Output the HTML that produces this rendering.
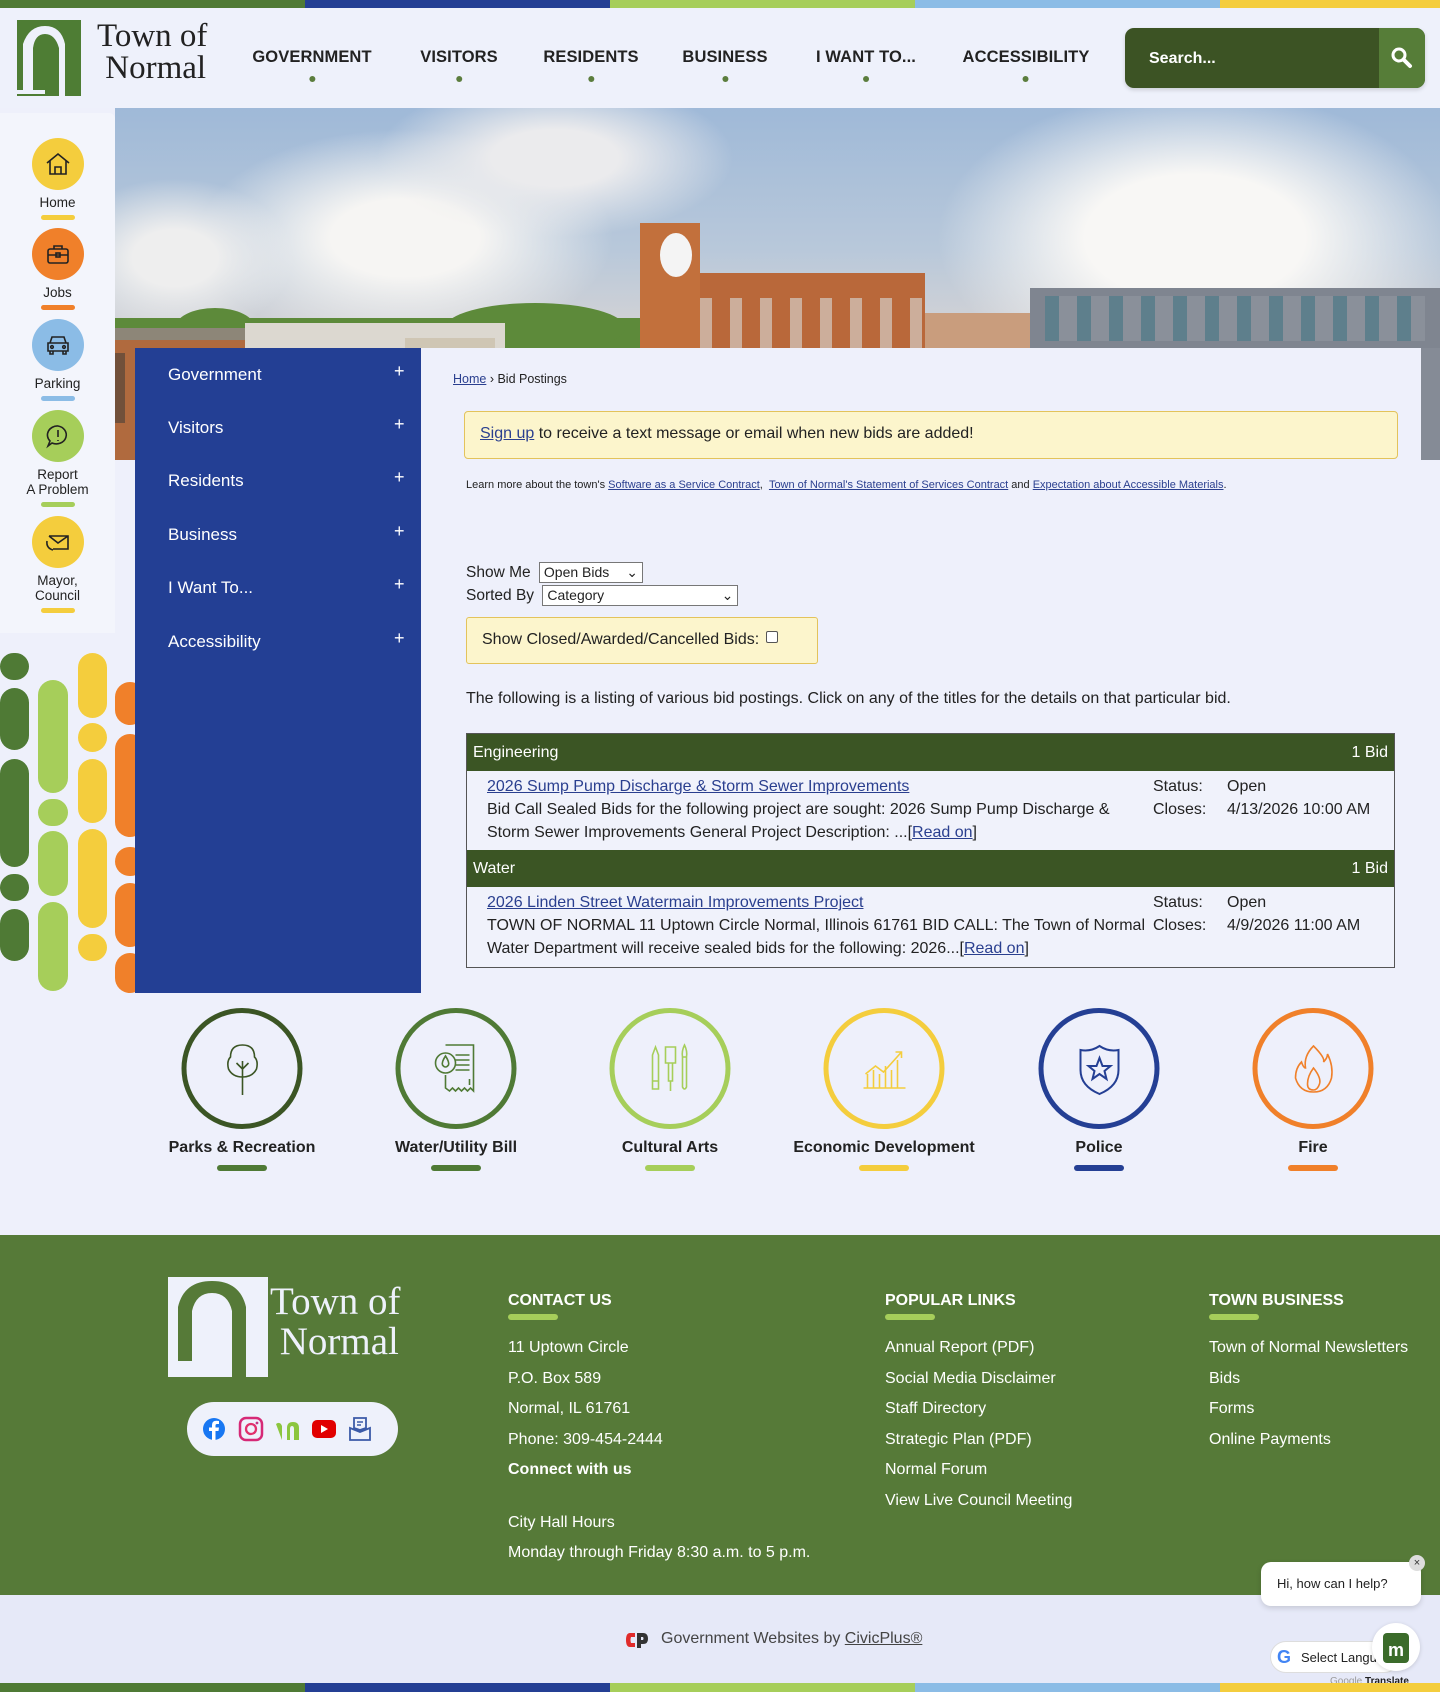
<!DOCTYPE html>
<html><head><meta charset="utf-8">
<style>
*{margin:0;padding:0;box-sizing:border-box}
body{width:1440px;height:1692px;position:relative;overflow:hidden;background:#eef0fb;font-family:"Liberation Sans",sans-serif;color:#222}
.a{position:absolute}
.stripe{height:8px;width:1440px;display:flex}
.stripe div{width:305px}
.stripe div:last-child{width:220px}
a{color:#2a3f8f}
.nav{font-weight:bold;font-size:16.5px;color:#222;top:48px;transform:translateX(-50%);text-align:center;letter-spacing:.1px}
.nav:after{content:"";display:block;width:6px;height:6px;border-radius:50%;background:#5b7d3d;margin:9px auto 0}
.ql{left:0;width:115px;text-align:center;font-size:13.5px;color:#222}
.ql .c{width:52px;height:52px;border-radius:50%;margin:0 auto 5px;display:flex;align-items:center;justify-content:center}
.ql .u{width:34px;height:5px;border-radius:3px;margin:5px auto 0}
.p{position:absolute;border-radius:15px}
.sn{left:168px;color:#fff;font-size:17px}
.pl{left:394px;color:#fff;font-size:18px}
.circ{width:121px;height:121px;border-radius:50%;border:5px solid;display:flex;align-items:center;justify-content:center;top:1008px;transform:translateX(-50%)}
.cl{top:1139px;transform:translateX(-50%);font-size:16px;font-weight:bold;color:#222;white-space:nowrap}
.cu{top:1165px;width:50px;height:6px;border-radius:3px;transform:translateX(-50%)}
.ft{color:#fff;font-size:16px}
.fh{font-weight:bold;font-size:16px;color:#fff;top:1292px}
.fu{top:1314px;width:50px;height:6px;border-radius:3px;background:#a6ce5a}
td{vertical-align:top}
</style></head><body>

<div class="a stripe" style="top:0"><div style="background:#4f7a35"></div><div style="background:#243f94"></div><div style="background:#a6ce5a"></div><div style="background:#8bbce6"></div><div style="background:#f4cd3d"></div></div>

<!-- header -->
<div class="a" style="top:8px;left:0;width:1440px;height:100px;background:#eef1fb"></div>
<svg class="a" style="left:15px;top:18px" width="80" height="80" viewBox="0 0 80 80">
<rect x="0" y="0" width="80" height="80" fill="#eef1fb"/>
<rect x="2" y="2" width="64" height="76" fill="#4e7d34"/>
<path d="M8 72 V26 Q14 8 30 8 Q46 8 50 26 V78 H44 V30 Q40 16 30 16 Q20 16 18 30 V72Z" fill="#eef1fb"/>
<rect x="0" y="72" width="30" height="4" fill="#eef1fb"/>
</svg>
<div class="a" style="left:97px;top:20px;font-family:'Liberation Serif',serif;font-size:33px;line-height:32px;color:#222">Town of<br>&nbsp;Normal</div>

<div class="a nav" style="left:312px">GOVERNMENT</div>
<div class="a nav" style="left:459px">VISITORS</div>
<div class="a nav" style="left:591px">RESIDENTS</div>
<div class="a nav" style="left:725px">BUSINESS</div>
<div class="a nav" style="left:866px">I WANT TO...</div>
<div class="a nav" style="left:1026px">ACCESSIBILITY</div>

<div class="a" style="left:1125px;top:28px;width:300px;height:60px;border-radius:9px;background:#3c5324;overflow:hidden;box-shadow:0 2px 4px rgba(0,0,0,.15)">
<div class="a" style="left:24px;top:22px;color:#fff;font-size:16px;font-weight:bold">Search...</div>
<div class="a" style="right:0;top:0;width:46px;height:60px;background:#567d38"></div>
<svg class="a" style="right:11px;top:18px" width="24" height="24" viewBox="0 0 24 24"><circle cx="9" cy="9" r="6" fill="none" stroke="#fff" stroke-width="3"/><path d="M13.5 13.5 L20 20" stroke="#fff" stroke-width="4" stroke-linecap="round"/></svg>
</div>

<!-- hero -->
<div class="a" style="left:115px;top:108px;width:1325px;height:352px;overflow:hidden;background:linear-gradient(#9fb9d8 0%,#b8c8da 40%,#cfd1d6 60%,#d8d5d0 75%)">
 <div class="a" style="left:80px;top:20px;width:420px;height:220px;border-radius:50%;background:radial-gradient(#f6f5f3 25%,rgba(230,230,232,0) 70%)"></div>
 <div class="a" style="left:260px;top:-30px;width:360px;height:160px;border-radius:50%;background:radial-gradient(#ebebed 25%,rgba(230,230,232,0) 70%)"></div>
 <div class="a" style="left:820px;top:-20px;width:520px;height:300px;border-radius:50%;background:radial-gradient(#f8f7f5 30%,rgba(240,240,240,0) 70%)"></div>
 <div class="a" style="left:-60px;top:70px;width:240px;height:160px;border-radius:50%;background:radial-gradient(#eeeeee 25%,rgba(236,236,236,0) 70%)"></div>
 <div class="a" style="left:0;top:210px;width:1325px;height:40px;background:#5d8a3a"></div>
 <div class="a" style="left:60px;top:200px;width:80px;height:40px;border-radius:50%;background:#5d8a3a"></div>
 <div class="a" style="left:330px;top:195px;width:180px;height:50px;border-radius:50%;background:#5d8a3a"></div>
 <div class="a" style="left:0;top:225px;width:270px;height:130px;background:#b06a3e"></div>
 <div class="a" style="left:0;top:220px;width:270px;height:12px;background:#8d8678"></div>
 <div class="a" style="left:0;top:245px;width:270px;height:70px;background:repeating-linear-gradient(90deg,#3e3a36 0 10px,#b06a3e 10px 34px);opacity:.55"></div>
 <div class="a" style="left:130px;top:215px;width:260px;height:30px;background:#dcd8d0"></div>
 <div class="a" style="left:290px;top:230px;width:90px;height:120px;background:#cfc6b4"></div>
 <div class="a" style="left:525px;top:115px;width:60px;height:240px;background:#c2703c"></div>
 <div class="a" style="left:585px;top:165px;width:225px;height:190px;background:#b9683a"></div>
 <div class="a" style="left:585px;top:190px;width:225px;height:120px;background:repeating-linear-gradient(90deg,#d9dcdc 0 12px,#b9683a 12px 30px);opacity:.6"></div>
 <div class="a" style="left:545px;top:125px;width:32px;height:44px;border-radius:50%;background:#f4f4f4"></div>
 <div class="a" style="left:810px;top:205px;width:120px;height:150px;background:#c99d7d"></div>
 <div class="a" style="left:915px;top:180px;width:410px;height:60px;background:#7f8590"></div>
 <div class="a" style="left:915px;top:240px;width:270px;height:120px;background:#bd6e43"></div>
 <div class="a" style="left:1185px;top:240px;width:140px;height:120px;background:#858b96"></div>
 <div class="a" style="left:930px;top:188px;width:380px;height:45px;background:repeating-linear-gradient(90deg,#5e7f8c 0 14px,#8a909a 14px 32px)"></div>
 <div class="a" style="left:930px;top:255px;width:250px;height:60px;background:repeating-linear-gradient(90deg,#3d5560 0 12px,#bd6e43 12px 32px);opacity:.6"></div>
</div>

<!-- quick links panel -->
<div class="a" style="left:0;top:113px;width:115px;height:520px;background:#f3f5fc;border-radius:0 6px 0 0"></div>
<div class="a ql" style="top:138px"><div class="c" style="background:#f4cd3d"><svg width="28" height="28" viewBox="0 0 28 28" fill="none" stroke="#222" stroke-width="1.6"><path d="M3 13 L14 4 L25 13 M6 11 V24 H22 V11 M11 24 V17 H17 V24"/></svg></div>Home<div class="u" style="background:#f4cd3d"></div></div>
<div class="a ql" style="top:228px"><div class="c" style="background:#f0802a"><svg width="28" height="28" viewBox="0 0 28 28" fill="none" stroke="#222" stroke-width="1.6"><rect x="4" y="9" width="20" height="14" rx="2"/><path d="M10 9 V6 H18 V9 M4 15 H24"/><rect x="12" y="13" width="4" height="4"/></svg></div>Jobs<div class="u" style="background:#f0802a"></div></div>
<div class="a ql" style="top:319px"><div class="c" style="background:#8bbce6"><svg width="30" height="28" viewBox="0 0 30 28" fill="none" stroke="#222" stroke-width="1.6"><path d="M7 12 L9 6 H21 L23 12 M5 12 H25 V20 H5Z M7 20 V23 H10 V20 M20 20 V23 H23 V20"/><circle cx="9" cy="16" r="1.3"/><circle cx="21" cy="16" r="1.3"/></svg></div>Parking<div class="u" style="background:#8bbce6"></div></div>
<div class="a ql" style="top:410px"><div class="c" style="background:#a6ce5a"><svg width="28" height="28" viewBox="0 0 28 28" fill="none" stroke="#222" stroke-width="1.6"><path d="M14 4 A10 9 0 1 1 8 21 L4 24 L6 19 A10 9 0 0 1 14 4Z M14 8 V15 M14 18 V19"/></svg></div>Report<br>A Problem<div class="u" style="background:#a6ce5a"></div></div>
<div class="a ql" style="top:516px"><div class="c" style="background:#f4cd3d"><svg width="30" height="28" viewBox="0 0 30 28" fill="none" stroke="#222" stroke-width="1.6"><path d="M6 8 H25 V21 H10 M6 8 L15 15 L25 8 M4 13 Q3 20 10 22"/></svg></div>Mayor,<br>Council<div class="u" style="background:#f4cd3d"></div></div>

<!-- decorative pills -->
<div class="p" style="left:0;top:653px;width:29px;height:27px;background:#4f7a35"></div>
<div class="p" style="left:0;top:688px;width:29px;height:62px;background:#4f7a35"></div>
<div class="p" style="left:0;top:759px;width:29px;height:108px;background:#4f7a35"></div>
<div class="p" style="left:0;top:874px;width:29px;height:27px;background:#4f7a35"></div>
<div class="p" style="left:0;top:909px;width:29px;height:52px;background:#4f7a35"></div>
<div class="p" style="left:38px;top:680px;width:30px;height:113px;background:#a6ce5a"></div>
<div class="p" style="left:38px;top:799px;width:30px;height:27px;background:#a6ce5a"></div>
<div class="p" style="left:38px;top:831px;width:30px;height:65px;background:#a6ce5a"></div>
<div class="p" style="left:38px;top:902px;width:30px;height:89px;background:#a6ce5a"></div>
<div class="p" style="left:78px;top:653px;width:29px;height:65px;background:#f4cd3d"></div>
<div class="p" style="left:78px;top:723px;width:29px;height:29px;background:#f4cd3d"></div>
<div class="p" style="left:78px;top:759px;width:29px;height:64px;background:#f4cd3d"></div>
<div class="p" style="left:78px;top:829px;width:29px;height:99px;background:#f4cd3d"></div>
<div class="p" style="left:78px;top:934px;width:29px;height:27px;background:#f4cd3d"></div>
<div class="p" style="left:115px;top:682px;width:30px;height:43px;background:#f0802a"></div>
<div class="p" style="left:115px;top:734px;width:30px;height:103px;background:#f0802a"></div>
<div class="p" style="left:115px;top:847px;width:30px;height:29px;background:#f0802a"></div>
<div class="p" style="left:115px;top:883px;width:30px;height:64px;background:#f0802a"></div>
<div class="p" style="left:115px;top:953px;width:30px;height:40px;background:#f0802a"></div>

<!-- side nav -->
<div class="a" style="left:135px;top:348px;width:286px;height:645px;background:#233f94"></div>
<div class="a sn" style="top:365px">Government</div><div class="a pl" style="top:361px">+</div>
<div class="a sn" style="top:418px">Visitors</div><div class="a pl" style="top:414px">+</div>
<div class="a sn" style="top:471px">Residents</div><div class="a pl" style="top:467px">+</div>
<div class="a sn" style="top:525px">Business</div><div class="a pl" style="top:521px">+</div>
<div class="a sn" style="top:578px">I Want To...</div><div class="a pl" style="top:574px">+</div>
<div class="a sn" style="top:632px">Accessibility</div><div class="a pl" style="top:628px">+</div>

<!-- content -->
<div class="a" style="left:421px;top:348px;width:1000px;height:645px;background:#eef0fb"></div>
<div class="a" style="left:453px;top:372px;font-size:12.5px"><a href="#">Home</a> › Bid Postings</div>
<div class="a" style="left:464px;top:411px;width:934px;height:48px;background:#fcf5cc;border:1px solid #e3c35b;border-radius:4px;padding:13px 15px;font-size:16px"><a href="#">Sign up</a> to receive a text message or email when new bids are added!</div>
<div class="a" style="left:466px;top:479px;font-size:11px">Learn more about the town's <a href="#">Software as a Service Contract</a>, &nbsp;<a href="#">Town of Normal's Statement of Services Contract</a> and <a href="#">Expectation about Accessible Materials</a>.</div>
<div class="a" style="left:466px;top:562px;font-size:15.5px">Show Me <span style="display:inline-block;border:1px solid #777;background:#fff;font-size:14px;padding:1px 4px;width:104px;margin-left:4px">Open Bids <span style="float:right">⌄</span></span></div>
<div class="a" style="left:466px;top:585px;font-size:15.5px">Sorted By <span style="display:inline-block;border:1px solid #777;background:#fff;font-size:14px;padding:1px 4px;width:196px;margin-left:4px">Category <span style="float:right">⌄</span></span></div>
<div class="a" style="left:466px;top:617px;width:352px;height:47px;background:#fcf5cc;border:1px solid #e3c35b;border-radius:3px;padding:13px 15px;font-size:16px">Show Closed/Awarded/Cancelled Bids: <span style="display:inline-block;width:12px;height:12px;border:1px solid #555;background:#fff;border-radius:2px;vertical-align:1px;margin-left:2px"></span></div>
<div class="a" style="left:466px;top:690px;font-size:16px">The following is a listing of various bid postings. Click on any of the titles for the details on that particular bid.</div>

<div class="a" style="left:466px;top:733px;width:929px;border:1px solid #555;font-size:16px;line-height:23px">
 <div style="background:#3b5524;color:#fff;height:37px;padding:7px 6px;display:flex;justify-content:space-between"><span>Engineering</span><span>1 Bid</span></div>
 <div style="height:79px;position:relative;padding:4px 20px;background:#f0f2fb">
  <div style="width:660px"><a href="#">2026 Sump Pump Discharge &amp; Storm Sewer Improvements</a><br>Bid Call Sealed Bids for the following project are sought: 2026 Sump Pump Discharge &amp; Storm Sewer Improvements General Project Description: ...[<a href="#">Read on</a>]</div>
  <div class="a" style="left:686px;top:4px">Status:<br>Closes:</div><div class="a" style="left:760px;top:4px">Open<br>4/13/2026 10:00 AM</div>
 </div>
 <div style="background:#3b5524;color:#fff;height:37px;padding:7px 6px;display:flex;justify-content:space-between"><span>Water</span><span>1 Bid</span></div>
 <div style="height:80px;position:relative;padding:4px 20px;background:#f0f2fb">
  <div style="width:660px"><a href="#">2026 Linden Street Watermain Improvements Project</a><br>TOWN OF NORMAL 11 Uptown Circle Normal, Illinois 61761 BID CALL: The Town of Normal Water Department will receive sealed bids for the following: 2026...[<a href="#">Read on</a>]</div>
  <div class="a" style="left:686px;top:4px">Status:<br>Closes:</div><div class="a" style="left:760px;top:4px">Open<br>4/9/2026 11:00 AM</div>
 </div>
</div>

<!-- circles -->
<div class="a circ" style="left:242px;border-color:#3b5524"><svg width="44" height="56" viewBox="0 0 44 56" fill="none" stroke="#3b5524" stroke-width="1.6"><path d="M22 4 Q10 4 10 16 Q6 20 8 28 Q12 36 22 36 Q32 36 36 28 Q38 20 34 16 Q34 4 22 4Z M22 20 V54 M22 28 L16 22 M22 28 L28 22"/></svg></div>
<div class="a circ" style="left:456px;border-color:#4f7a35"><svg width="50" height="56" viewBox="0 0 50 56" fill="none" stroke="#4f7a35" stroke-width="1.6"><path d="M14 4 H42 V50 L39 47 L36 50 L33 47 L30 50 L27 47 L24 50 L21 47 L18 50 L14 47 V34 M24 14 H38 M24 19 H38 M24 24 H38 M24 29 H38"/><circle cx="14" cy="22" r="10"/><path d="M14 15 Q10 21 11 24 Q14 28 17 24 Q18 21 14 15Z M38 38 V44"/></svg></div>
<div class="a circ" style="left:670px;border-color:#a6ce5a"><svg width="52" height="56" viewBox="0 0 52 56" fill="none" stroke="#a6ce5a" stroke-width="1.6"><path d="M8 14 L11 6 L14 14 V48 H8Z M8 40 H14 M21 6 H31 V22 H21Z M24 22 V40 H28 V22 M26 40 V50 M40 4 Q43 10 42 16 H38 Q37 10 40 4Z M38 16 V46 Q40 50 42 46 V16"/></svg></div>
<div class="a circ" style="left:884px;border-color:#f4cd3d"><svg width="50" height="50" viewBox="0 0 50 50" fill="none" stroke="#f4cd3d" stroke-width="1.6"><path d="M4 44 H46 M8 44 V30 M14 44 V26 M20 44 V30 M26 44 V22 M32 44 V26 M38 44 V16 M6 30 L16 22 L24 28 L42 8 M36 8 H42 V14"/></svg></div>
<div class="a circ" style="left:1099px;border-color:#243f94"><svg width="46" height="54" viewBox="0 0 46 54" fill="none" stroke="#243f94" stroke-width="2"><path d="M4 8 Q14 10 23 4 Q32 10 42 8 V28 Q42 44 23 52 Q4 44 4 28Z"/><path d="M23 16 L26 24 L34 24 L28 29 L30 37 L23 32 L16 37 L18 29 L12 24 L20 24Z"/></svg></div>
<div class="a circ" style="left:1313px;border-color:#f0802a"><svg width="44" height="54" viewBox="0 0 44 54" fill="none" stroke="#f0802a" stroke-width="1.6"><path d="M22 4 Q34 16 32 20 Q36 16 36 12 Q42 24 40 36 Q36 50 22 50 Q8 50 4 36 Q4 26 10 20 Q12 26 14 26 Q12 14 22 4Z M22 26 Q30 36 28 42 Q26 48 22 48 Q16 48 16 42 Q16 34 22 26Z"/></svg></div>

<div class="a cl" style="left:242px">Parks &amp; Recreation</div><div class="a cu" style="left:242px;background:#4f7a35"></div>
<div class="a cl" style="left:456px">Water/Utility Bill</div><div class="a cu" style="left:456px;background:#4f7a35"></div>
<div class="a cl" style="left:670px">Cultural Arts</div><div class="a cu" style="left:670px;background:#a6ce5a"></div>
<div class="a cl" style="left:884px">Economic Development</div><div class="a cu" style="left:884px;background:#f4cd3d"></div>
<div class="a cl" style="left:1099px">Police</div><div class="a cu" style="left:1099px;background:#243f94"></div>
<div class="a cl" style="left:1313px">Fire</div><div class="a cu" style="left:1313px;background:#f0802a"></div>

<!-- footer -->
<div class="a" style="left:0;top:1235px;width:1440px;height:360px;background:#567a38"></div>
<svg class="a" style="left:168px;top:1277px" width="100" height="100" viewBox="0 0 100 100">
<rect x="0" y="0" width="100" height="100" fill="#eef1fb"/>
<path d="M10 84 V30 Q16 4 44 4 Q72 4 78 30 V100 H64 V34 Q60 16 44 16 Q28 16 24 34 V84Z" fill="#567a38"/>
<path d="M0 84 H10 V90 H0Z" fill="#eef1fb"/>
</svg>
<div class="a" style="left:270px;top:1282px;font-family:'Liberation Serif',serif;font-size:39px;line-height:40px;color:#eef1fb">Town of<br>&nbsp;Normal</div>
<div class="a" style="left:187px;top:1402px;width:211px;height:54px;border-radius:27px;background:#eef1fb"></div>
<svg class="a" style="left:202px;top:1416px" width="180" height="26" viewBox="0 0 180 26">
<circle cx="12" cy="13" r="11" fill="#1877f2"/><path d="M13.5 24 V15 H16.5 L17 11.5 H13.5 V9.5 Q13.5 8 15 8 H17 V5 Q15.5 4.8 14.5 4.8 Q10 4.8 10 9 V11.5 H7 V15 H10 V24Z" fill="#fff"/>
<rect x="38" y="2" width="22" height="22" rx="6" fill="none" stroke="#d62976" stroke-width="2.5"/><circle cx="49" cy="13" r="5" fill="none" stroke="#e1306c" stroke-width="2.3"/><circle cx="55" cy="7" r="1.4" fill="#c13584"/>
<path d="M74 8 Q78 5 80 10 V24 H85 V12 Q85 6 91 6 Q97 6 97 12 V24 H92 V13 Q92 10 90 10 Q88 10 88 13 V24 H80" fill="#8cc63f" stroke="none"/>
<rect x="110" y="4" width="24" height="18" rx="5" fill="#e10000"/><path d="M119 9 L126 13 L119 17Z" fill="#fff"/>
<path d="M152 2 H164 V12 L158 14 L152 12Z M148 12 L158 16 L168 12 V24 H148Z" fill="none" stroke="#3b5aa8" stroke-width="1.8"/><path d="M155 6 H161 M155 9 H159" stroke="#3b5aa8" stroke-width="1.5"/>
</svg>

<div class="a fh" style="left:508px">CONTACT US</div><div class="a fu" style="left:508px"></div>
<div class="a ft" style="left:508px;top:1333px;line-height:30.5px">11 Uptown Circle<br>P.O. Box 589<br>Normal, IL 61761<br>Phone: 309-454-2444<br><b>Connect with us</b></div>
<div class="a ft" style="left:508px;top:1508px;line-height:30px">City Hall Hours<br>Monday through Friday 8:30 a.m. to 5 p.m.</div>

<div class="a fh" style="left:885px">POPULAR LINKS</div><div class="a fu" style="left:885px"></div>
<div class="a ft" style="left:885px;top:1333px;line-height:30.5px">Annual Report (PDF)<br>Social Media Disclaimer<br>Staff Directory<br>Strategic Plan (PDF)<br>Normal Forum<br>View Live Council Meeting</div>

<div class="a fh" style="left:1209px">TOWN BUSINESS</div><div class="a fu" style="left:1209px"></div>
<div class="a ft" style="left:1209px;top:1333px;line-height:30.5px">Town of Normal Newsletters<br>Bids<br>Forms<br>Online Payments</div>

<!-- bottom -->
<div class="a" style="left:0;top:1595px;width:1440px;height:88px;background:#e6e9f8"></div>
<svg class="a" style="left:625px;top:1631px" width="24" height="18" viewBox="0 0 24 18"><path d="M10 2 H5 Q1 2 1 9 Q1 16 5 16 H10 V12 H6 Q5 9 6 6 H10Z" fill="#e02b2b"/><path d="M12 2 H18 Q23 2 23 8 Q23 13 18 13 H16 V17 H12Z M16 6 V9 H18 Q19 7.5 18 6Z" fill="#333"/></svg>
<div class="a" style="left:661px;top:1630px;font-size:16px;color:#444">Government Websites by <a href="#" style="color:#444">CivicPlus®</a></div>

<div class="a" style="left:1261px;top:1562px;width:160px;height:44px;background:#fff;border-radius:10px;box-shadow:0 2px 6px rgba(0,0,0,.15);font-size:13px;padding:14px 0 0 16px;color:#222">Hi, how can I help?</div>
<div class="a" style="left:1409px;top:1555px;width:16px;height:16px;border-radius:50%;background:#ddd;font-size:11px;text-align:center;line-height:16px;color:#333">×</div>
<div class="a" style="left:1270px;top:1641px;width:130px;height:32px;background:#fff;border-radius:16px;border:1px solid #ddd;font-size:13px;padding:8px 0 0 30px;color:#222">Select Langu</div>
<div class="a" style="left:1277px;top:1649px;font-size:18px;font-weight:bold;color:#4285f4;line-height:16px">G</div>
<div class="a" style="left:1372px;top:1623px;width:48px;height:48px;border-radius:50%;background:#fff;box-shadow:0 1px 4px rgba(0,0,0,.15)"></div>
<div class="a" style="left:1383px;top:1633px;width:26px;height:30px;background:#3b6b2a;border-radius:4px;color:#fff;font-weight:bold;text-align:center;font-size:18px;line-height:34px">m</div>
<div class="a" style="left:1330px;top:1676px;font-size:10px;color:#222"><span style="color:#999">Google</span> <b>Translate</b></div>

<div class="a stripe" style="top:1683px;height:9px"><div style="background:#4f7a35"></div><div style="background:#243f94"></div><div style="background:#a6ce5a"></div><div style="background:#8bbce6"></div><div style="background:#f4cd3d"></div></div>
</body></html>
